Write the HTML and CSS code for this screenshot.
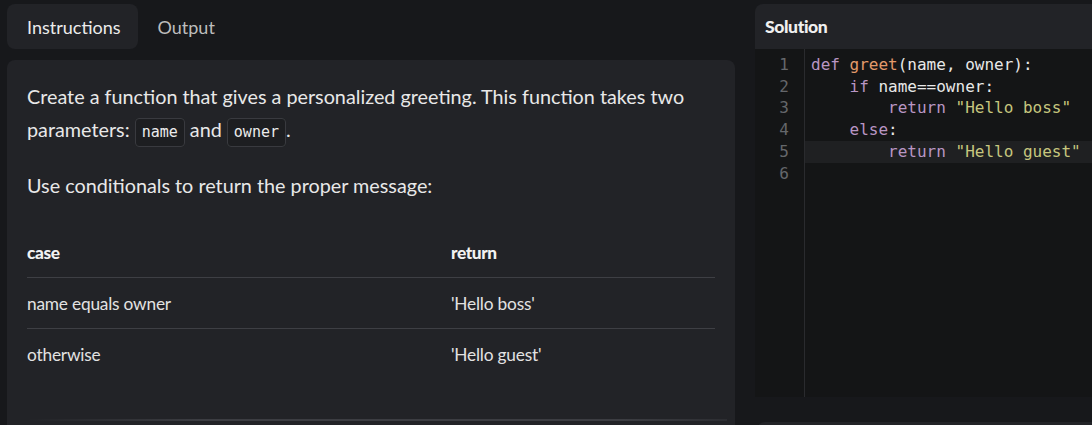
FILE: index.html
```html
<!DOCTYPE html>
<html lang="en">
<head>
<meta charset="utf-8">
<title>Kata</title>
<link rel="stylesheet" href="styles.css">
</head>
<body>
<div class="page">
  <section class="left">
    <nav class="tabs">
      <button class="tab active">Instructions</button>
      <button class="tab">Output</button>
    </nav>
    <div class="panel">
      <p class="desc first">Create a function that gives a personalized greeting. This function takes two parameters: <code>name</code> and <code>owner</code>.</p>
      <p class="desc">Use conditionals to return the proper message:</p>
      <table class="cases">
        <thead>
          <tr><th class="c1">case</th><th>return</th></tr>
        </thead>
        <tbody>
          <tr><td class="c1">name equals owner</td><td>'Hello boss'</td></tr>
          <tr><td class="c1">otherwise</td><td>'Hello guest'</td></tr>
        </tbody>
      </table>
      <div class="rule"></div>
    </div>
  </section>
  <section class="right">
    <div class="solution">
      <div class="sol-head">Solution</div>
      <div class="editor">
        <div class="gutter">
          <div>1</div><div>2</div><div>3</div><div>4</div><div>5</div><div>6</div>
        </div>
        <div class="code">
          <div class="ln"><span class="kw">def</span> <span class="fn">greet</span>(name, owner):</div>
          <div class="ln">    <span class="kw">if</span> name==owner:</div>
          <div class="ln">        <span class="kw">return</span> <span class="str">"Hello boss"</span></div>
          <div class="ln">    <span class="kw">else</span>:</div>
          <div class="ln active">        <span class="kw">return</span> <span class="str">"Hello guest"</span></div>
          <div class="ln"> </div>
        </div>
      </div>
    </div>
    <div class="next"></div>
  </section>
</div>
</body>
</html>
```
FILE: styles.css
```css
html, body {
  margin: 0;
  padding: 0;
  height: 100%;
  overflow: hidden;
  background: #17181b;
  font-family: Lato, "Noto Sans", sans-serif;
  color: #e6e6e6;
}

.page {
  display: flex;
  gap: 20px;
  padding: 4px 0 0 7px;
  width: 1110px;
  height: 100%;
  box-sizing: border-box;
}

.left {
  width: 728px;
  flex: none;
  display: flex;
  flex-direction: column;
  gap: 11px;
}

.tabs {
  display: flex;
  height: 45px;
  flex: none;
}

.tab {
  font-family: inherit;
  font-size: 18px;
  border: none;
  background: transparent;
  color: #bdbdbd;
  padding: 0 19px 0 20px;
  border-radius: 8px;
  height: 45px;
  cursor: pointer;
}

.tab.active {
  background: #222327;
  color: #ececec;
  padding-right: 17px;
}

.panel {
  flex: 1;
  background: #222327;
  border-radius: 8px 8px 0 0;
  padding: 20px 20px 0 20px;
  overflow: hidden;
}

.desc {
  margin: 0 0 20px;
  font-size: 19.8px;
  line-height: 33px;
  color: #e8e8e8;
}

code {
  font-family: "DejaVu Sans Mono", monospace;
  font-size: 15px;
  background: #1d1e21;
  border: 1px solid #393a3f;
  border-radius: 4px;
  padding: 4px 6px 5px;
  color: #ececec;
}

.cases {
  border-collapse: collapse;
  width: 688px;
  margin-top: 25px;
  font-size: 17.3px;
}

.cases th, .cases td {
  text-align: left;
  padding: 0;
  height: 50px;
  vertical-align: middle;
}

.cases th {
  font-weight: 900;
  border-bottom: 1px solid #3e3f44;
  color: #f2f2f2;
  letter-spacing: -0.4px;
}

.cases td {
  color: #e2e2e2;
  letter-spacing: -0.2px;
}

.cases tbody tr:first-child td {
  border-bottom: 1px solid #3e3f44;
}

.cases .c1 {
  width: 424px;
}

.rule {
  margin-top: 40px;
  height: 2px;
  width: 700px;
  background: linear-gradient(to right, rgba(60,61,66,0) 0%, #3c3d42 25%, #3c3d42 85%, rgba(60,61,66,0.4) 100%);
}

.right {
  flex: 1;
  display: flex;
  flex-direction: column;
  gap: 25px;
}

.solution {
  flex: none;
  border-radius: 8px 8px 0 0;
  overflow: hidden;
}

.sol-head {
  background: #222327;
  height: 45px;
  display: flex;
  align-items: center;
  padding-left: 10px;
  font-size: 17.6px;
  font-weight: 900;
  color: #f0f0f0;
  letter-spacing: -0.4px;
}

.editor {
  background: #141516;
  height: 348px;
  display: flex;
  font-family: "DejaVu Sans Mono", monospace;
  font-size: 16px;
  line-height: 21.7px;
}

.gutter {
  width: 50px;
  border-right: 1px solid #2a2b2e;
  text-align: right;
  color: #65676b;
  padding-top: 5px;
  box-sizing: border-box;
}

.gutter div {
  padding-right: 15px;
}

.code {
  flex: 1;
  padding-top: 5px;
}

.ln {
  white-space: pre;
  padding-left: 6px;
  color: #e8e8e8;
}

.ln.active {
  background: #1f2022;
}

.kw { color: #b996c4; }
.fn { color: #e39a6a; }
.str { color: #c6c67e; }

.next {
  flex: none;
  background: #222327;
  height: 20px;
  border-radius: 8px 8px 0 0;
  margin-left: 2px;
}
```
